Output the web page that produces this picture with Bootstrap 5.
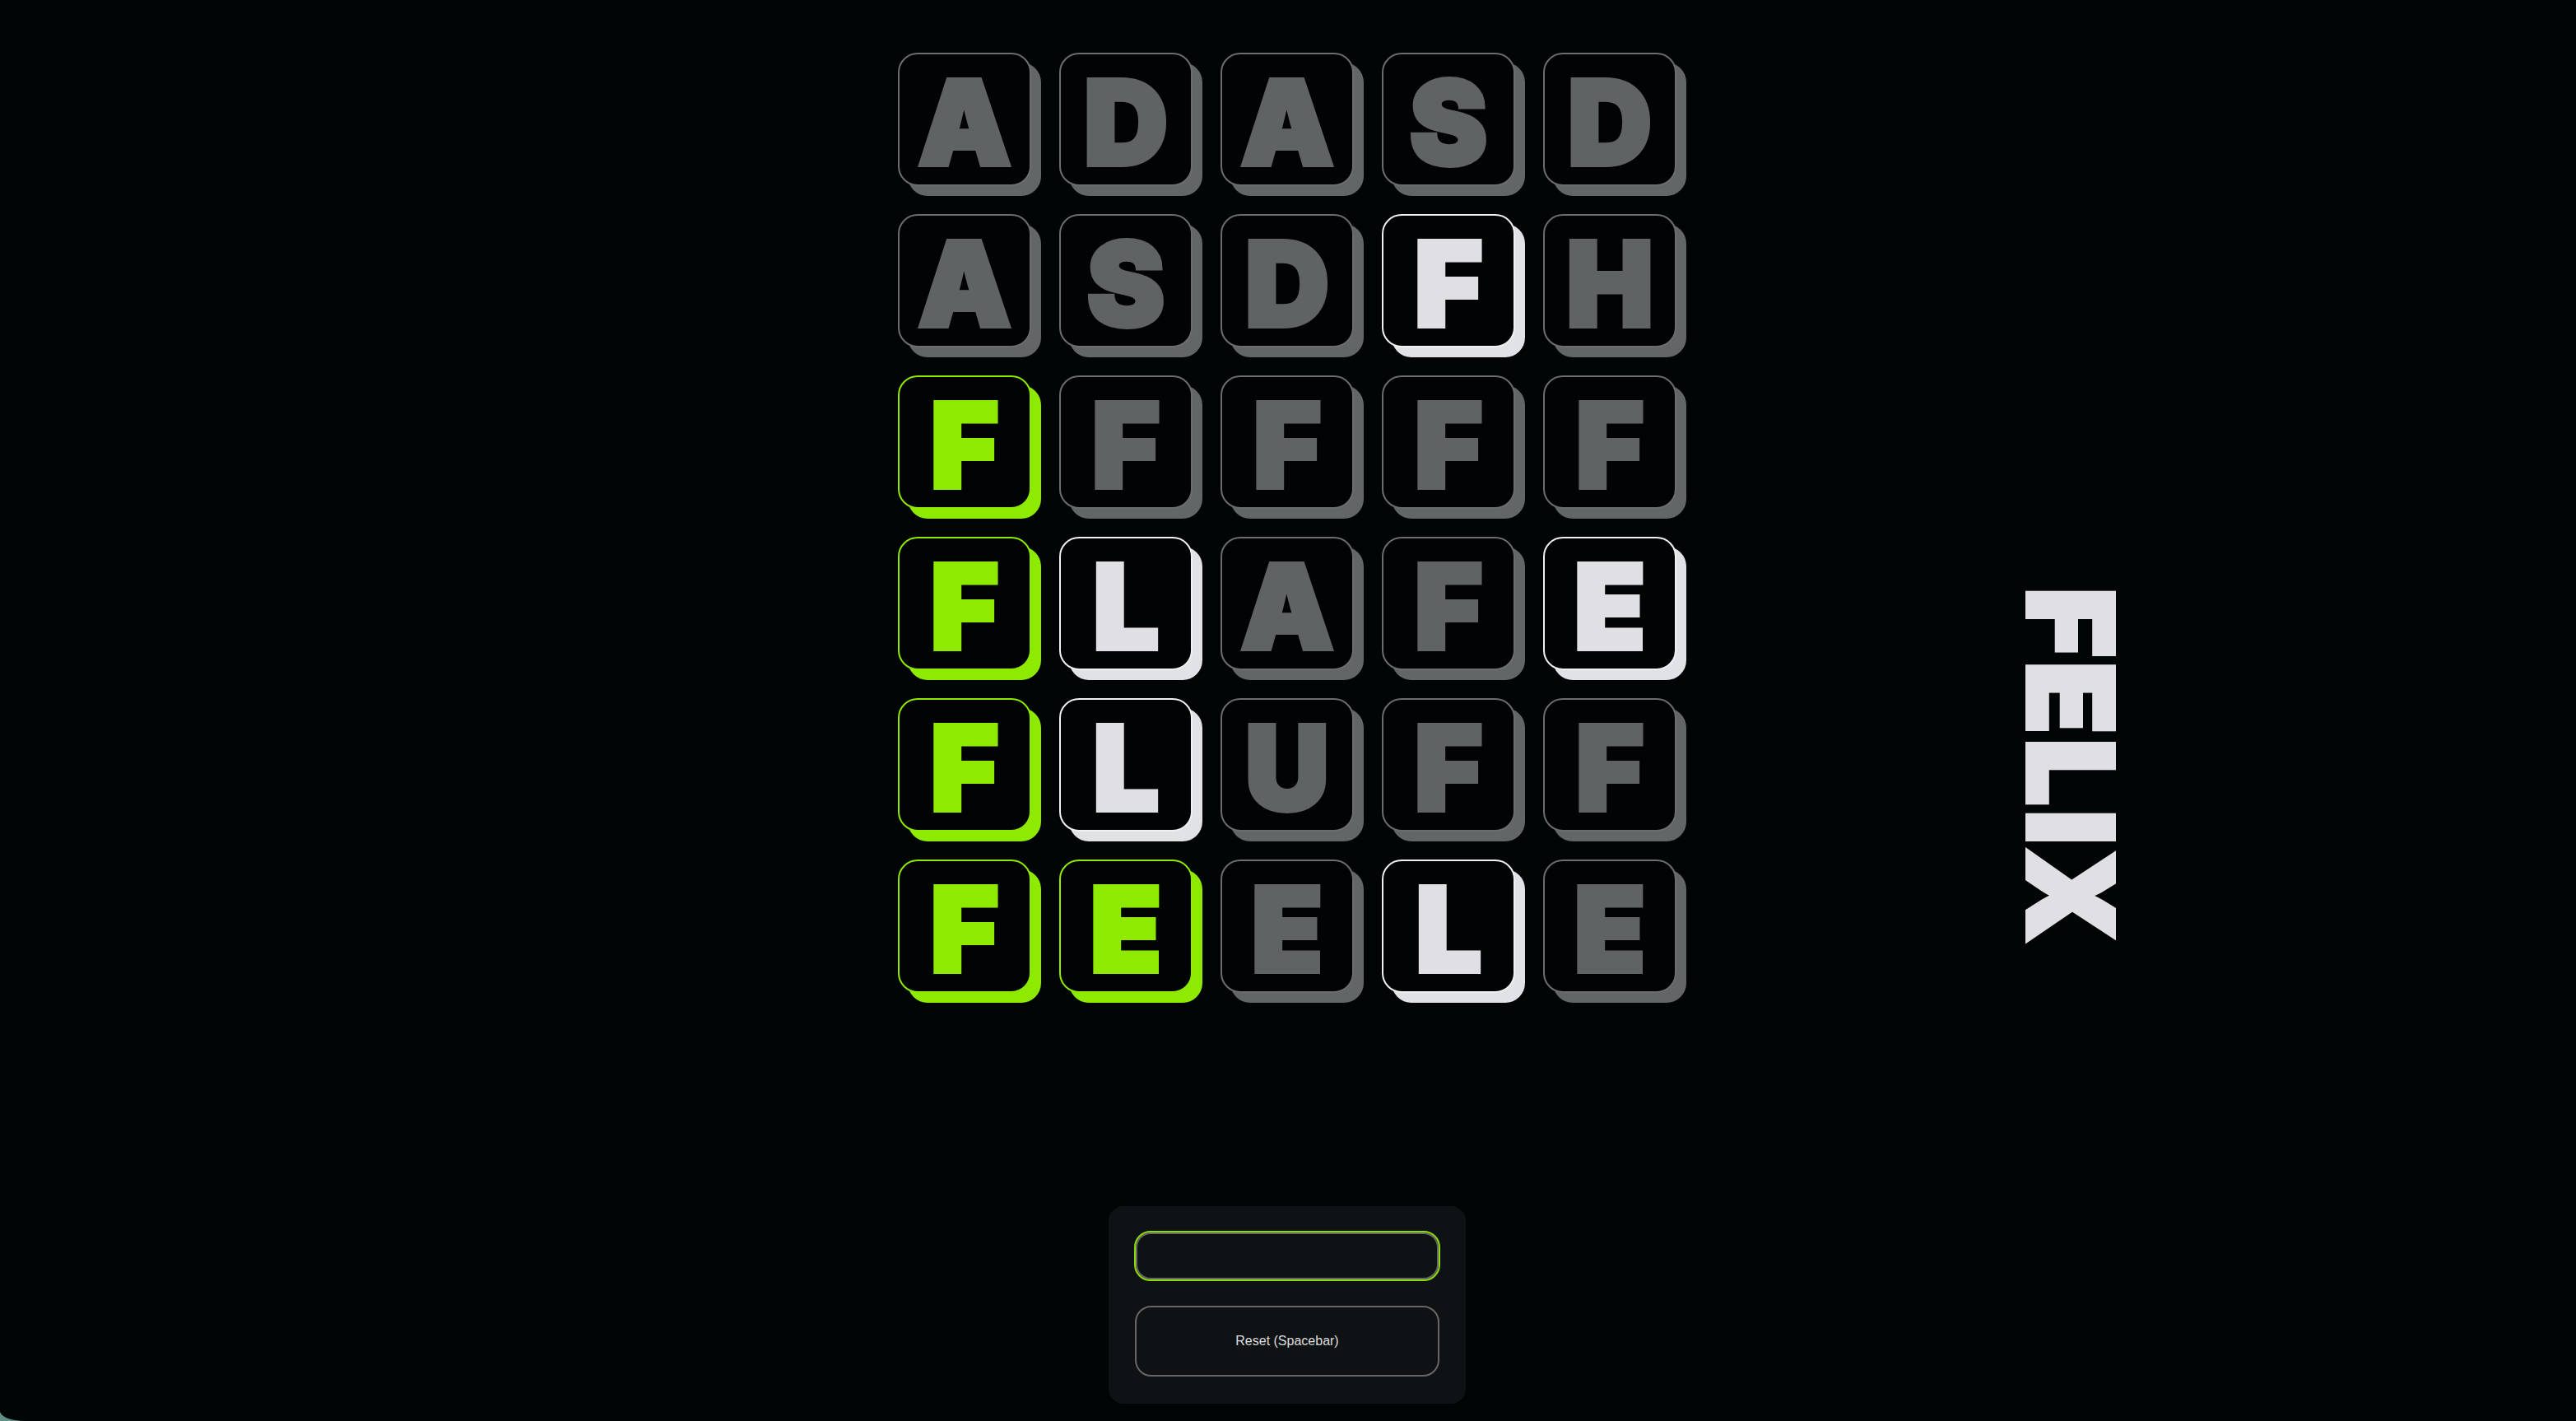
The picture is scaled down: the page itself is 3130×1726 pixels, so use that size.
<!DOCTYPE html>
<html lang="en"><head><meta charset="utf-8"><title>Felix</title>
<link href="https://cdn.jsdelivr.net/npm/bootstrap@5.3.0/dist/css/bootstrap.min.css" rel="stylesheet">
<style>
html,body{height:100%;background:#5f8f85;overflow:hidden}
.stage{height:1726px;background:#010506;padding-top:64px;border-bottom-left-radius:30px 12px}
.toprow{padding-left:1091px}
.board{display:grid;grid-template-columns:repeat(5,162px);grid-auto-rows:162px;gap:34px}
.tile{display:flex;align-items:center;justify-content:center;padding-top:7px;border:2px solid #6a6e6e;border-radius:24px;box-shadow:12px 12px 0 #626666;background:#010305;color:#5f6363;font:900 141px/1 Inter,sans-serif;-webkit-text-stroke:6px currentColor}
.tile.hit{border-color:#8eea00;box-shadow:12px 12px 0 #8eea00;color:#8eea00}
.tile.near{border-color:#f0f0f2;box-shadow:12px 12px 0 #e0e2e5;color:#e0e0e4}
.vword{margin-left:424px;margin-top:650px;writing-mode:vertical-rl;height:436px;color:#e0e0e4;font:900 143px/110px Inter,sans-serif;-webkit-text-stroke:6px currentColor;letter-spacing:6px;white-space:nowrap}
.panel{margin:259px 0 0 1347px;width:434px;height:240px;background:#0f1214;border-radius:18px;padding:32px}
.guess{display:block;width:368px;height:57px;margin:0 1px 32px;background:#0f1214;border:2px solid #666;outline:2px solid #8cd90a;border-radius:18px}
.resetbtn{display:block;width:100%;height:86px;background:#0f1214;border:2px solid #666;border-radius:20px;color:#ddd;font:16px "Liberation Sans",Arial,sans-serif}
</style></head><body>
<div class="stage">
<div class="d-flex align-items-start toprow">
<div class="board">
<div class="tile">A</div><div class="tile">D</div><div class="tile">A</div><div class="tile">S</div><div class="tile">D</div>
<div class="tile">A</div><div class="tile">S</div><div class="tile">D</div><div class="tile near">F</div><div class="tile">H</div>
<div class="tile hit">F</div><div class="tile">F</div><div class="tile">F</div><div class="tile">F</div><div class="tile">F</div>
<div class="tile hit">F</div><div class="tile near">L</div><div class="tile">A</div><div class="tile">F</div><div class="tile near">E</div>
<div class="tile hit">F</div><div class="tile near">L</div><div class="tile">U</div><div class="tile">F</div><div class="tile">F</div>
<div class="tile hit">F</div><div class="tile hit">E</div><div class="tile">E</div><div class="tile near">L</div><div class="tile">E</div>
</div>
<div class="vword">FELIX</div>
</div>
<div class="panel"><input class="guess" type="text" aria-label="Guess"><button class="resetbtn" type="button">Reset (Spacebar)</button></div>
</div>
<script src="https://cdn.jsdelivr.net/npm/bootstrap@5.3.0/dist/js/bootstrap.bundle.min.js"></script>
</body></html>
